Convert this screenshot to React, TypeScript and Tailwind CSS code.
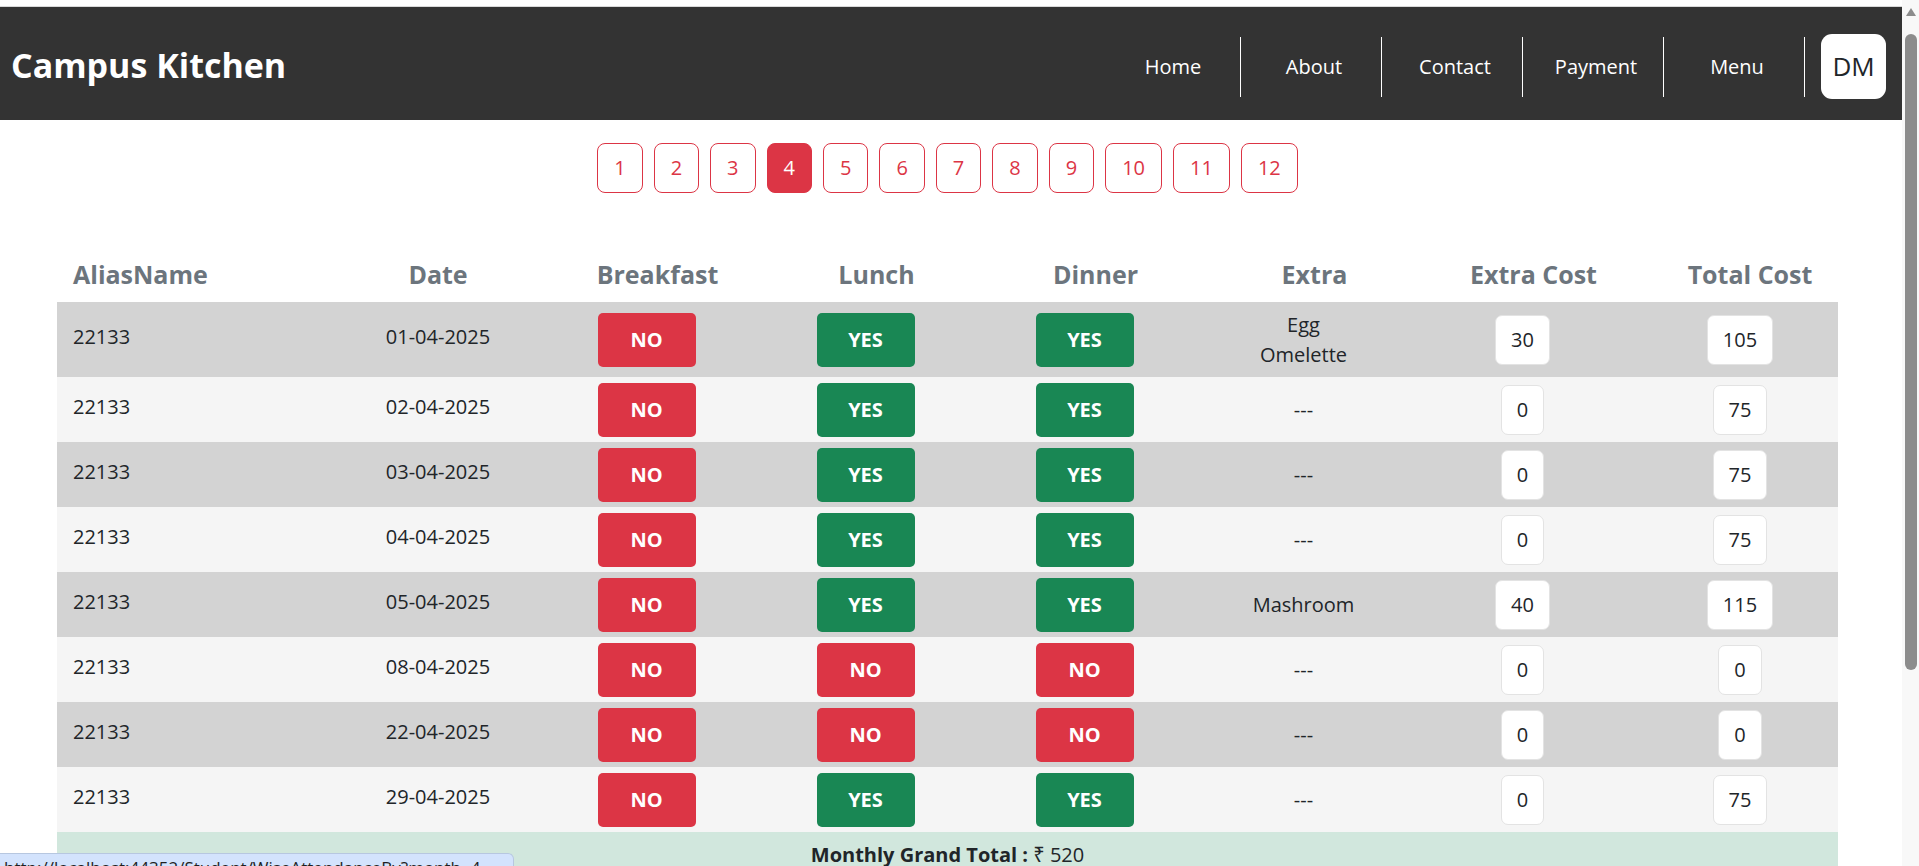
import React from 'react'

type Row = {
  date: string
  breakfast: boolean
  lunch: boolean
  dinner: boolean
  extra: string[] | null
  extraCost: number
  totalCost: number
}

const rows: Row[] = [
  { date: '01-04-2025', breakfast: false, lunch: true, dinner: true, extra: ['Egg', 'Omelette'], extraCost: 30, totalCost: 105 },
  { date: '02-04-2025', breakfast: false, lunch: true, dinner: true, extra: null, extraCost: 0, totalCost: 75 },
  { date: '03-04-2025', breakfast: false, lunch: true, dinner: true, extra: null, extraCost: 0, totalCost: 75 },
  { date: '04-04-2025', breakfast: false, lunch: true, dinner: true, extra: null, extraCost: 0, totalCost: 75 },
  { date: '05-04-2025', breakfast: false, lunch: true, dinner: true, extra: ['Mashroom'], extraCost: 40, totalCost: 115 },
  { date: '08-04-2025', breakfast: false, lunch: false, dinner: false, extra: null, extraCost: 0, totalCost: 0 },
  { date: '22-04-2025', breakfast: false, lunch: false, dinner: false, extra: null, extraCost: 0, totalCost: 0 },
  { date: '29-04-2025', breakfast: false, lunch: true, dinner: true, extra: null, extraCost: 0, totalCost: 75 },
]

const links = ['Home', 'About', 'Contact', 'Payment', 'Menu']
const pages = [1, 2, 3, 4, 5, 6, 7, 8, 9, 10, 11, 12]

function Badge({ yes }: { yes: boolean }) {
  return (
    <div
      className={
        yes
          ? 'flex h-[54px] w-[98px] items-center justify-center rounded-[5px] bg-[#198754] text-[20px] font-bold text-white'
          : 'flex h-[54px] w-[98px] items-center justify-center rounded-[5px] bg-[#dc3545] text-[20px] font-bold text-white'
      }
    >
      {yes ? 'YES' : 'NO'}
    </div>
  )
}

function CostBox({ value }: { value: number }) {
  return (
    <div className="rounded-[7px] border border-[#e3e3e3] bg-white px-[15px] py-[9px] text-[20px] leading-[30px] text-[#212529]">
      {value}
    </div>
  )
}

function App() {
  return (
    <div className="min-h-[1130px] w-[1902px] bg-white pt-[6px] font-['Open_Sans','Noto_Sans',sans-serif] text-[#212529]">
      <div className="border-t border-[#d9d9d9]">
        <nav className="flex h-[113px] items-center justify-between bg-[#333333] pl-[11px] pr-[16px]">
          <h1 className="pt-[4px] text-[34px] font-bold text-white">Campus Kitchen</h1>
          <div className="mt-[6px] flex items-center">
            <ul className="flex items-center">
              {links.map((l) => (
                <li
                  key={l}
                  className="flex h-[60px] w-[141px] items-center justify-center border-r border-white pl-[6px] text-[20px] text-white"
                >
                  {l}
                </li>
              ))}
            </ul>
            <div className="ml-[16px] flex h-[65px] w-[65px] items-center justify-center rounded-[11px] bg-white text-[26px] text-[#212529]">
              DM
            </div>
          </div>
        </nav>
      </div>

      <div className="ml-[57px] w-[1781px]">
        <div className="mt-[23px] flex justify-center gap-[11px]">
          {pages.map((p) => (
            <button
              key={p}
              className={
                p === 4
                  ? 'rounded-[8px] border border-[#dc3545] bg-[#dc3545] px-[16px] py-[9px] text-[20px] leading-[30px] text-white'
                  : 'rounded-[8px] border border-[#dc3545] bg-white px-[16px] py-[9px] text-[20px] leading-[30px] text-[#dc3545]'
              }
            >
              {p}
            </button>
          ))}
        </div>

        <div className="mt-[55px]">
          <div className="grid h-[54px] grid-cols-[282px_198px_219px_219px_219px_219px_219px_206px] items-center text-[25px] font-bold text-[#6c757d]">
            <div className="pl-[16px]">AliasName</div>
            <div className="text-center">Date</div>
            <div className="pl-[22px] text-center">Breakfast</div>
            <div className="pl-[22px] text-center">Lunch</div>
            <div className="pl-[22px] text-center">Dinner</div>
            <div className="pl-[22px] text-center">Extra</div>
            <div className="pl-[22px] text-center">Extra Cost</div>
            <div className="pl-[30px] text-center">Total Cost</div>
          </div>

          {rows.map((r, i) => (
            <div
              key={r.date}
              className={
                (i % 2 === 0 ? 'bg-[#d3d3d3] ' : 'bg-[#f5f5f5] ') +
                (i === 0 ? 'h-[75px] ' : 'h-[65px] ') +
                'grid grid-cols-[282px_198px_219px_219px_219px_219px_219px_206px] items-center text-[20px] leading-[30px]'
              }
            >
              <div className="pb-[5px] pl-[16px]">22133</div>
              <div className="pb-[5px] text-center">{r.date}</div>
              <div className="flex justify-center">
                <Badge yes={r.breakfast} />
              </div>
              <div className="flex justify-center">
                <Badge yes={r.lunch} />
              </div>
              <div className="flex justify-center">
                <Badge yes={r.dinner} />
              </div>
              <div className="text-center">
                {r.extra ? (
                  r.extra.map((e) => <div key={e}>{e}</div>)
                ) : (
                  <span>---</span>
                )}
              </div>
              <div className="flex justify-center">
                <CostBox value={r.extraCost} />
              </div>
              <div className="flex justify-center pl-[10px]">
                <CostBox value={r.totalCost} />
              </div>
            </div>
          ))}

          <div className="bg-[#d1e7dd] py-[8px] text-center text-[20px] leading-[30px]">
            <span className="font-bold">Monthly Grand Total :</span> ₹ 520
          </div>
        </div>
      </div>

      {/* status bubble */}
      <div className="fixed left-0 top-[853px] h-[30px] w-[514px] overflow-hidden whitespace-nowrap rounded-tr-[6px] border border-l-0 border-[#b7c7e0] bg-[#d3e3fd] pl-[4px] pt-[1px] text-[17px] text-[#1f1f1f]">
        http://localhost:44352/Student/WiseAttendanceBy?month=4
      </div>

      {/* scrollbar */}
      <div className="fixed right-0 top-0 h-[866px] w-[17px] bg-[#f8f8f8]">
        <div className="mx-auto mt-[8px] h-0 w-0 border-x-[5px] border-b-[8px] border-x-transparent border-b-[#8c8c8c]" />
        <div className="mx-auto mt-[18px] h-[636px] w-[12px] rounded-full bg-[#8c8c8c]" />
      </div>
    </div>
  )
}

export default App
